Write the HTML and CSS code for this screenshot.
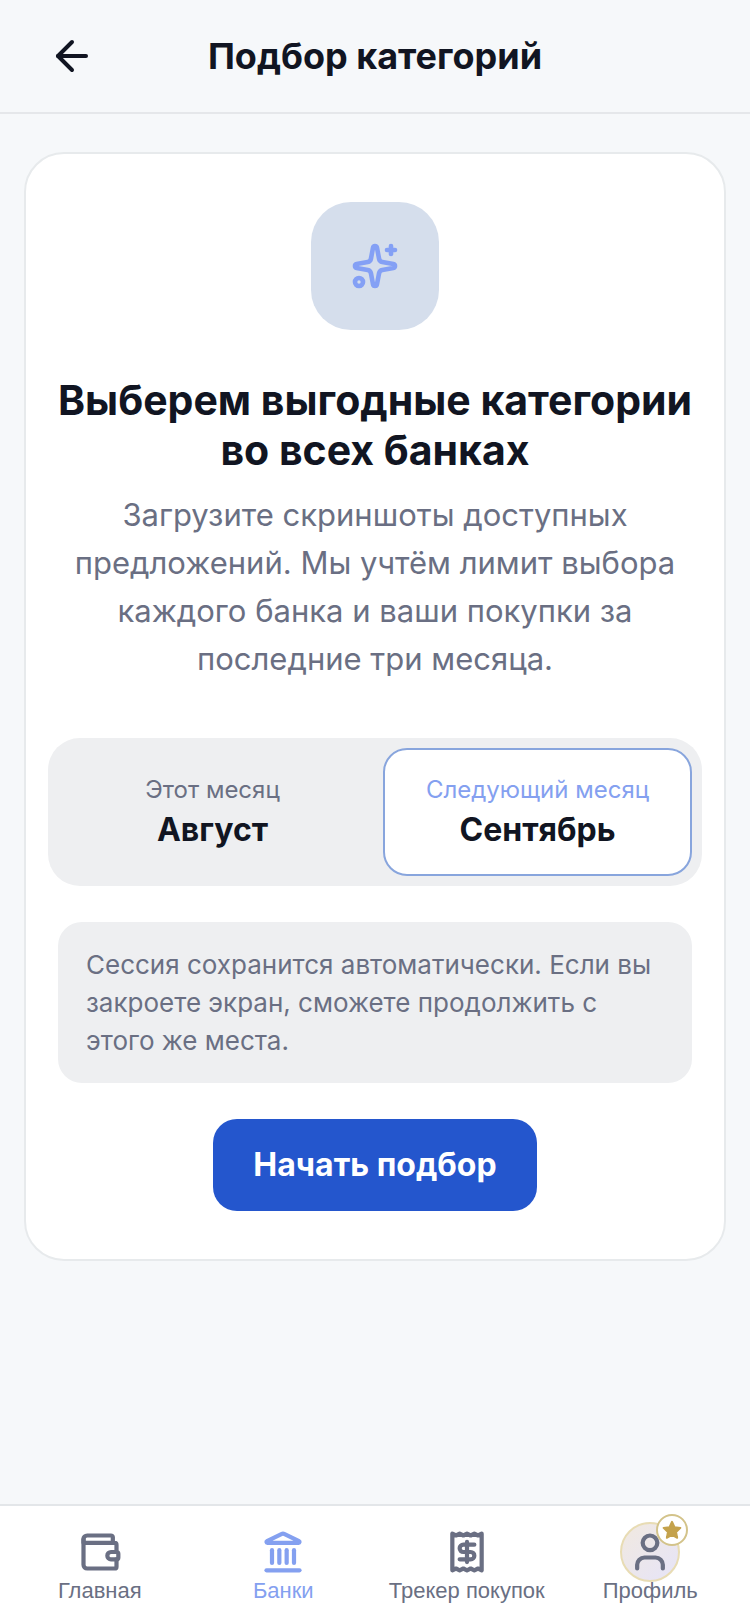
FILE: index.html
```html
<!DOCTYPE html>
<html lang="ru">
<head>
  <meta charset="UTF-8">
  <meta name="viewport" content="width=device-width, initial-scale=1">
  <title>Подбор категорий</title>
  <link rel="stylesheet" href="styles.css">
</head>
<body>
  <header class="header">
    <button type="button" class="back-button" aria-label="Назад">
      <svg class="icon" viewBox="0 0 24 24"><path d="m12 19-7-7 7-7"/><path d="M19 12H5"/></svg>
    </button>
    <h1 class="header-title">Подбор категорий</h1>
  </header>

  <main class="content">
    <section class="card">
      <div class="card-icon">
        <svg class="icon" viewBox="0 0 24 24">
          <path d="M11.017 2.814a1 1 0 0 1 1.966 0l1.051 5.558a2 2 0 0 0 1.594 1.594l5.558 1.051a1 1 0 0 1 0 1.966l-5.558 1.051a2 2 0 0 0-1.594 1.594l-1.051 5.558a1 1 0 0 1-1.966 0l-1.051-5.558a2 2 0 0 0-1.594-1.594l-5.558-1.051a1 1 0 0 1 0-1.966l5.558-1.051a2 2 0 0 0 1.594-1.594z"/>
          <path d="M20 2v4"/><path d="M22 4h-4"/>
          <circle cx="4" cy="20" r="2"/>
        </svg>
      </div>
      <h2 class="card-title">Выберем выгодные категории во всех банках</h2>
      <p class="card-text">Загрузите скриншоты доступных предложений. Мы учтём лимит выбора каждого банка и ваши покупки за последние три месяца.</p>

      <div class="months" role="group" aria-label="Месяц">
        <button type="button" class="month" aria-pressed="false">
          <span class="month-label">Этот месяц</span>
          <span class="month-name">Август</span>
        </button>
        <button type="button" class="month active" aria-pressed="true">
          <span class="month-label">Следующий месяц</span>
          <span class="month-name">Сентябрь</span>
        </button>
      </div>

      <p class="note">Сессия сохранится автоматически. Если вы закроете экран, сможете продолжить с этого же места.</p>

      <button type="button" class="start-button">Начать подбор</button>
    </section>
  </main>

  <nav class="tabbar">
    <a href="#" class="tab">
      <span class="tab-icon">
        <svg class="icon" viewBox="0 0 24 24">
          <path d="M19 7V4a1 1 0 0 0-1-1H5a2 2 0 0 0-2 2v2h17a1 1 0 0 1 1 1v4h-3a2 2 0 0 0 0 4h3a1 1 0 0 0 1-1v-2a1 1 0 0 0-1-1"/>
          <path d="M3 5v14a2 2 0 0 0 2 2h15a1 1 0 0 0 1-1v-4"/>
        </svg>
      </span>
      <span>Главная</span>
    </a>
    <a href="#" class="tab active" aria-current="page">
      <span class="tab-icon">
        <svg class="icon" viewBox="0 0 24 24">
          <path d="M11.12 2.198a2 2 0 0 1 1.76.006l7.866 3.847c.476.233.31.949-.22.949H3.474c-.53 0-.695-.716-.22-.949z"/>
          <path d="M6 18v-7"/><path d="M10 18v-7"/><path d="M14 18v-7"/><path d="M18 18v-7"/>
          <path d="M3 22h18"/>
        </svg>
      </span>
      <span>Банки</span>
    </a>
    <a href="#" class="tab">
      <span class="tab-icon">
        <svg class="icon" viewBox="0 0 24 24">
          <path d="M4 2v20l2-1 2 1 2-1 2 1 2-1 2 1 2-1 2 1V2l-2 1-2-1-2 1-2-1-2 1-2-1-2 1Z"/>
          <path d="M16 8h-6a2 2 0 1 0 0 4h4a2 2 0 1 1 0 4H8"/>
          <path d="M12 17.5v-11"/>
        </svg>
      </span>
      <span>Трекер покупок</span>
    </a>
    <a href="#" class="tab">
      <span class="tab-icon avatar">
        <svg class="icon" viewBox="0 0 24 24">
          <path d="M19 21v-2a4 4 0 0 0-4-4H9a4 4 0 0 0-4 4v2"/>
          <circle cx="12" cy="7" r="4"/>
        </svg>
        <span class="badge">
          <svg viewBox="0 0 24 24"><path d="M12 3l2.8 5.9 6.4.8-4.7 4.500 1.200 6.400L12 17.500l-5.700 3.100 1.200-6.400L2.800 9.700l6.400-.8z"/></svg>
        </span>
      </span>
      <span class="tab-label">Профиль</span>
    </a>
  </nav>
</body>
</html>
```
FILE: styles.css
```css
* {
  box-sizing: border-box;
}
body {
  margin: 0;
  min-height: 100vh;
  display: flex;
  flex-direction: column;
  background-color: #f6f8fa;
  color: #111522;
  font-family: Inter, "Noto Sans", sans-serif;
}
h1, h2, p {
  margin: 0;
}
button {
  padding: 0;
  border: none;
  background: none;
  color: inherit;
  font-family: inherit;
  cursor: pointer;
}
.icon {
  display: block;
  width: 100%;
  height: 100%;
  fill: none;
  stroke: currentColor;
  stroke-width: 2.3;
  stroke-linecap: round;
  stroke-linejoin: round;
}

/* header */
.header {
  display: grid;
  grid-template-columns: 48px 1fr 48px;
  align-items: center;
  padding: 32px 48px;
  border-bottom: 2px solid #e5e7ea;
}
.back-button {
  width: 48px;
  height: 48px;
}
.back-button .icon {
  stroke-width: 2;
}
.header-title {
  font-size: 36px;
  line-height: 48px;
  font-weight: 700;
  text-align: center;
}

/* card */
.content {
  flex: 1;
  padding: 38px 24px;
}
.card {
  display: flex;
  flex-direction: column;
  align-items: center;
  padding: 48px 22px;
  background-color: #fff;
  border: 2px solid #e7eaec;
  border-radius: 40px;
}
.card-icon {
  width: 128px;
  height: 128px;
  padding: 40px;
  border-radius: 40px;
  background-color: #d5deec;
  color: #84a0f5;
}
.card-title {
  margin-top: 45px;
  font-size: 41px;
  line-height: 50px;
  font-weight: 700;
  text-align: center;
}
.card-text {
  margin-top: 16px;
  padding: 0 20px;
  font-size: 31px;
  line-height: 48px;
  color: #6a6f83;
  text-align: center;
}

/* month switch */
.months {
  align-self: stretch;
  display: flex;
  gap: 16px;
  margin-top: 55px;
  padding: 10px;
  border-radius: 32px;
  background-color: #eeeff1;
}
.month {
  flex: 1;
  display: flex;
  flex-direction: column;
  align-items: center;
  padding: 22px 0;
  border: 2px solid transparent;
  border-radius: 24px;
}
.month.active {
  background-color: #fff;
  border-color: #88a5dd;
}
.month-label {
  font-size: 24px;
  line-height: 36px;
  color: #6a6f83;
}
.month.active .month-label {
  color: #84a0f0;
}
.month-name {
  font-size: 32px;
  line-height: 44px;
  font-weight: 700;
}

.note {
  align-self: stretch;
  margin: 36px 10px;
  padding: 24px 28px 23px;
  border-radius: 24px;
  background-color: #eeeff1;
  font-size: 26px;
  line-height: 38px;
  color: #6a6f83;
}
.start-button {
  padding: 24px 40px;
  border-radius: 24px;
  background-color: #2456cd;
  color: #fff;
  font-size: 32px;
  line-height: 44px;
  font-weight: 700;
}

/* bottom tabs */
.tabbar {
  display: flex;
  padding: 24px 8px 21px;
  background-color: #fff;
  border-top: 2px solid #e3e6e9;
  font-family: "Liberation Sans", Arial, sans-serif;
  font-size: 22px;
  line-height: 24px;
}
.tab {
  flex: 1;
  display: flex;
  flex-direction: column;
  align-items: center;
  gap: 5px;
  color: #6a6f83;
  text-decoration: none;
  white-space: nowrap;
}
.tab.active {
  color: #84a0f0;
}
.tab-icon {
  width: 44px;
  height: 44px;
}
.avatar {
  position: relative;
}
.avatar::before {
  content: "";
  position: absolute;
  inset: -8px;
  border: 2px solid #e8dcb4;
  border-radius: 50%;
  background: linear-gradient(135deg, #f1e9e0, #e6e4f8);
}
.avatar .icon,
.tab-label {
  position: relative;
}
.badge {
  position: absolute;
  top: -16px;
  right: -16px;
  width: 32px;
  height: 32px;
  padding: 3px;
  border: 2px solid #d3c38a;
  border-radius: 50%;
  background-color: #fff;
}
.badge svg {
  display: block;
  fill: #c4a24c;
  stroke: #c4a24c;
  stroke-width: 2;
  stroke-linejoin: round;
}
```
